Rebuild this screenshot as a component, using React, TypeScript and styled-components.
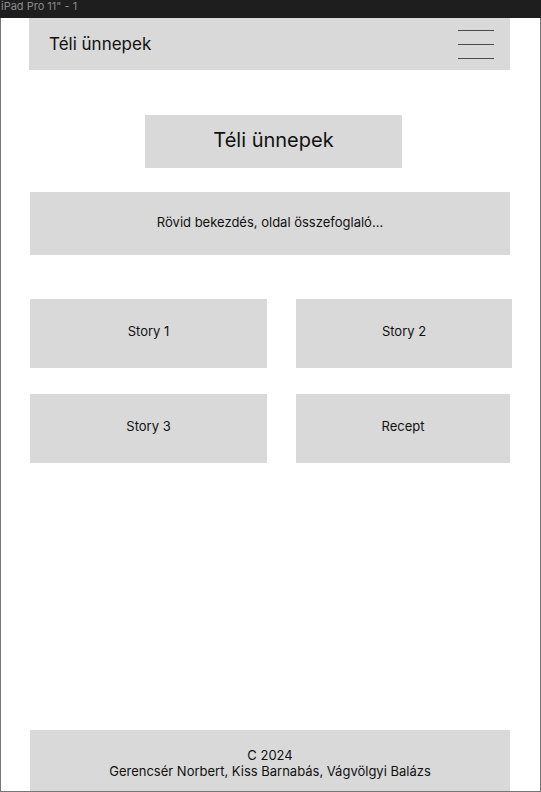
import React from "react";
import styled, { createGlobalStyle } from "styled-components";

const Global = createGlobalStyle`
  html, body { margin: 0; padding: 0; background: #ffffff; }
  body { font-family: Inter, "Noto Sans", "Liberation Sans", sans-serif; color: #111; }
  * { box-sizing: border-box; }
`;

const Page = styled.div`
  width: 541px;
  height: 792px;
  display: flex;
  flex-direction: column;
  overflow: hidden;
`;

const TopBar = styled.div`
  height: 18px;
  flex: none;
  background: #1e1e1e;
  color: #8a8a8a;
  font-size: 11px;
  line-height: 12px;
  padding: 0 0 0 1px;
  display: flex;
  align-items: flex-start;
`;

const Frame = styled.div`
  flex: 1;
  display: flex;
  flex-direction: column;
  border: 1px solid #767676;
  border-top: none;
  background: #ffffff;
`;

const Header = styled.header`
  margin-left: 28px;
  width: 481px;
  height: 52px;
  background: #d9d9d9;
  display: flex;
  align-items: center;
  justify-content: space-between;
  padding: 0 16px 0 20px;
`;

const Brand = styled.div`
  font-size: 17px;
  color: #111;
`;

const Burger = styled.div`
  width: 36px;
  display: flex;
  flex-direction: column;
  gap: 12.5px;
  padding-top: 1px;
`;

const BurgerLine = styled.span`
  display: block;
  height: 1.3px;
  background: #4a4a4a;
`;

const Box = styled.div<{ $ml: number; $w: number; $h: number; $mt: number; $size?: number }>`
  margin-left: ${(p) => p.$ml}px;
  margin-top: ${(p) => p.$mt}px;
  width: ${(p) => p.$w}px;
  height: ${(p) => p.$h}px;
  background: #d9d9d9;
  display: flex;
  align-items: center;
  justify-content: center;
  font-size: ${(p) => p.$size ?? 13}px;
  color: #111;
  padding-bottom: 3px;
`;

const Grid = styled.div`
  margin-left: 29px;
  margin-top: 44px;
  display: grid;
  grid-template-columns: 237px 216px;
  grid-auto-rows: 69px;
  column-gap: 29px;
  row-gap: 26px;
`;

const Card = styled.div<{ $w?: number }>`
  background: #d9d9d9;
  width: ${(p) => (p.$w ? `${p.$w}px` : "auto")};
  display: flex;
  align-items: center;
  justify-content: center;
  font-size: 13px;
  color: #111;
  padding-bottom: 5px;
`;

const Footer = styled.footer`
  margin-top: auto;
  margin-left: 29px;
  width: 480px;
  height: 61px;
  background: #d9d9d9;
  display: flex;
  flex-direction: column;
  align-items: center;
  justify-content: flex-start;
  padding-top: 17px;
  font-size: 13px;
  line-height: 16px;
  color: #111;
`;

export default function App() {
  return (
    <>
      <Global />
      <Page>
        <TopBar>iPad Pro 11" - 1</TopBar>
        <Frame>
          <Header>
            <Brand>Téli ünnepek</Brand>
            <Burger>
              <BurgerLine />
              <BurgerLine />
              <BurgerLine />
            </Burger>
          </Header>
          <Box $ml={144} $w={257} $h={53} $mt={45} $size={20}>
            Téli ünnepek
          </Box>
          <Box $ml={29} $w={480} $h={63} $mt={24}>
            Rövid bekezdés, oldal összefoglaló...
          </Box>
          <Grid>
            <Card>Story 1</Card>
            <Card>Story 2</Card>
            <Card>Story 3</Card>
            <Card $w={214}>Recept</Card>
          </Grid>
          <Footer>
            <div>C 2024</div>
            <div>Gerencsér Norbert, Kiss Barnabás, Vágvölgyi Balázs</div>
          </Footer>
        </Frame>
      </Page>
    </>
  );
}
